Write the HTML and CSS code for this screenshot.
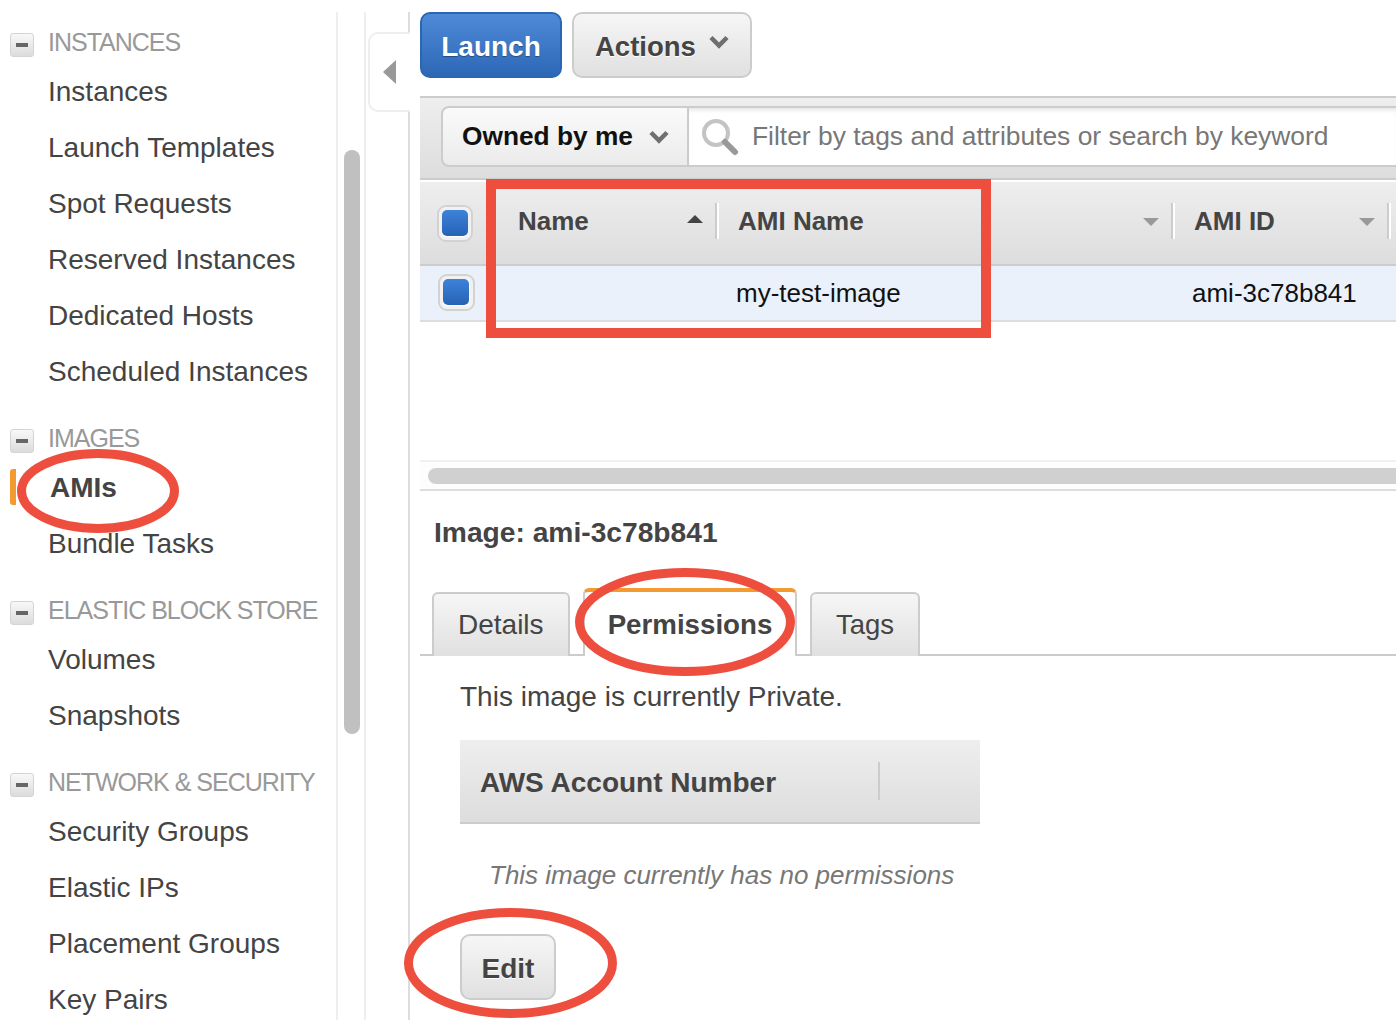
FILE: index.html
```html
<!DOCTYPE html>
<html lang="en">
<head>
<meta charset="utf-8">
<title>AMIs</title>
<link rel="stylesheet" href="styles.css">
</head>
<body>
<div class="page">
  <nav class="nav">
    <section class="group">
      <h3 class="group-head"><span class="minus"></span>INSTANCES</h3>
      <a class="item">Instances</a>
      <a class="item">Launch Templates</a>
      <a class="item">Spot Requests</a>
      <a class="item">Reserved Instances</a>
      <a class="item">Dedicated Hosts</a>
      <a class="item">Scheduled Instances</a>
    </section>
    <section class="group">
      <h3 class="group-head"><span class="minus"></span>IMAGES</h3>
      <a class="item current">AMIs</a>
      <a class="item">Bundle Tasks</a>
    </section>
    <section class="group">
      <h3 class="group-head"><span class="minus"></span>ELASTIC BLOCK STORE</h3>
      <a class="item">Volumes</a>
      <a class="item">Snapshots</a>
    </section>
    <section class="group">
      <h3 class="group-head"><span class="minus"></span>NETWORK &amp; SECURITY</h3>
      <a class="item">Security Groups</a>
      <a class="item">Elastic IPs</a>
      <a class="item">Placement Groups</a>
      <a class="item">Key Pairs</a>
    </section>
  </nav>
  <div class="nav-scroll"><div class="nav-thumb"></div></div>
  <div class="toggle-col">
    <div class="toggle"><svg width="14" height="24" viewBox="0 0 14 24"><path d="M14 0V24L1 12Z" fill="#999"/></svg></div>
  </div>
  <main class="main">
    <div class="toolbar">
      <button class="btn primary">Launch</button>
      <button class="btn actions">Actions<svg class="chev" width="20" height="14" viewBox="0 0 20 14"><path d="M2 2.5L10 10.5L18 2.5" fill="none" stroke="#6f6f6f" stroke-width="4.5"/></svg></button>
    </div>
    <div class="filter-bar">
      <div class="filter-group">
        <div class="owned"><span>Owned by me</span><svg class="chev-small" width="20" height="14" viewBox="0 0 20 14"><path d="M2 2.5L10 10.5L18 2.5" fill="none" stroke="#6f6f6f" stroke-width="4.5"/></svg></div>
        <div class="search">
          <svg width="38" height="38" viewBox="0 0 38 38"><circle cx="15" cy="15" r="12" fill="none" stroke="#c4c4c4" stroke-width="4"/><path d="M24 24L34 34" stroke="#999" stroke-width="6" stroke-linecap="round"/></svg>
          <span>Filter by tags and attributes or search by keyword</span>
        </div>
      </div>
    </div>
    <div class="thead">
      <div class="cell-check"><span class="check"></span></div>
      <div class="th th-name">Name<span class="sort up"></span></div>
      <div class="th th-ami">AMI Name<span class="sort"></span></div>
      <div class="th th-id">AMI ID<span class="sort"></span></div>
    </div>
    <div class="tr">
      <div class="cell-check"><span class="check row-check"></span></div>
      <div class="td td-name"></div>
      <div class="td td-ami">my-test-image</div>
      <div class="td td-id">ami-3c78b841</div>
    </div>
    <div class="table-space"></div>
    <div class="hscroll"><div class="hthumb"></div></div>
    <h2 class="detail-title">Image: ami-3c78b841</h2>
    <div class="tabs">
      <div class="tab">Details</div>
      <div class="tab active">Permissions</div>
      <div class="tab">Tags</div>
    </div>
    <div class="pane">
      <p class="private">This image is currently Private.</p>
      <div class="acct-head"><div class="acct-label">AWS Account Number</div></div>
      <p class="none">This image currently has no permissions</p>
      <button class="btn edit">Edit</button>
    </div>
  </main>
  <div class="mark-rect"></div>
  <svg class="marks" width="1396" height="1020" viewBox="0 0 1396 1020">
    <ellipse cx="98" cy="491" rx="76.500" ry="37.500"/>
    <ellipse cx="685" cy="622" rx="105.500" ry="49.500"/>
    <ellipse cx="510.500" cy="963" rx="102" ry="50.500"/>
  </svg>
</div>
</body>
</html>
```

FILE: styles.css
```css
* { box-sizing: border-box; }
html, body { margin: 0; padding: 0; background: #fff; }
body { font-family: "Liberation Sans", Arial, sans-serif; color: #444; overflow: hidden; }
.page { position: relative; display: flex; width: 1396px; height: 1020px; overflow: hidden; }

.nav { flex: 0 0 338px; height: 1008px; margin-top: 12px; padding-top: 9px; border-right: 2px solid #eee; display: flex; flex-direction: column; gap: 18px; }
.group { display: flex; flex-direction: column; }
.group-head { display: flex; align-items: center; height: 42px; margin: 0; font-size: 25px; font-weight: 400; color: #999; letter-spacing: -1px; }
.minus { flex: 0 0 24px; height: 24px; margin: 6px 14px 0 10px; border: 1px solid #d4d4d4; border-radius: 3px; background: linear-gradient(#f8f8f8, #dcdcdc); display: flex; align-items: center; justify-content: center; }
.minus::before { content: ""; width: 12px; height: 4px; background: #666; }
.item { display: flex; align-items: center; height: 56px; padding: 2px 0 0 48px; font-size: 28px; color: #444; }
.item.current { position: relative; padding-left: 50px; font-weight: 700; }
.item.current::before { content: ""; position: absolute; left: 10px; top: 10px; width: 6px; height: 36px; background: #f49a33; border-radius: 3px 0 0 3px; }

.nav-scroll { flex: 0 0 28px; height: 1008px; margin-top: 12px; border-right: 2px solid #eee; position: relative; }
.nav-thumb { position: absolute; left: 6px; top: 138px; width: 16px; height: 584px; background: #c0c0c0; border-radius: 8px; }

.toggle-col { flex: 0 0 44px; min-width: 0; height: 1008px; margin-top: 12px; border-right: 2px solid #ddd; padding-top: 20px; padding-left: 2px; }
.toggle { width: 42px; height: 80px; background: #fff; border: 2px solid #eee; border-right: 0; border-radius: 10px 0 0 10px; display: flex; align-items: center; padding-left: 12px; }

.main { flex: 1 1 auto; min-width: 0; padding: 12px 0 0 10px; display: flex; flex-direction: column; }
.toolbar { display: flex; gap: 10px; height: 66px; margin-bottom: 18px; }
.btn { font-family: inherit; font-size: 28px; font-weight: 700; border-radius: 10px; padding: 4px 0 0; cursor: pointer; }
.primary { width: 142px; height: 66px; color: #fff; border: 2px solid #2a67b3; background: linear-gradient(#4f8ad9, #2d68b6); text-shadow: 0 1px 1px rgba(0,0,0,.35); }
.actions { width: 180px; height: 66px; font-size: 27.500px; color: #444; border: 2px solid #ccc; background: linear-gradient(#f6f6f6, #e0e0e0); text-shadow: 0 1px 0 #fff; display: flex; align-items: center; padding-left: 21px; }
.chev { margin-left: 13px; margin-top: -10px; }

.filter-bar { width: 976px; height: 84px; padding: 8px 0 0 21px; border-top: 2px solid #ccc; border-bottom: 2px solid #ccc; background: linear-gradient(#eee, #ddd); }
.filter-group { display: flex; height: 61px; }
.owned { width: 248px; height: 61px; display: flex; align-items: center; padding-left: 19px; font-size: 26.300px; font-weight: 700; color: #111; background: linear-gradient(#fafafa, #ebebeb); border: 2px solid #ccc; border-radius: 8px 0 0 8px; }
.chev-small { margin-left: 16px; }
.search { flex: 1; display: flex; align-items: center; gap: 13px; padding-left: 12px; height: 61px; font-size: 26.400px; color: #777; background: #fff; border-top: 2px solid #ccc; border-bottom: 2px solid #ccc; box-shadow: inset 0 4px 4px -2px #e4e4e4; }

.thead { width: 976px; height: 86px; display: flex; background: linear-gradient(#eee, #ddd); border-top: 2px solid #fff; border-bottom: 2px solid #ccc; }
.cell-check { flex: 0 0 77px; position: relative; }
.check { position: absolute; left: 17px; top: 23px; width: 36px; height: 37px; border: 2px solid #d2d2d2; border-radius: 9px; background: #fff; box-shadow: inset 0 0 0 3px #f1f1f1; }
.check::after { content: ""; position: absolute; left: 3px; top: 3px; width: 26px; height: 26px; border-radius: 5px; background: linear-gradient(#3e82da, #2563b4); }
.row-check { left: 18px; top: 8px; width: 37px; }
.th { position: relative; font-size: 26px; font-weight: 700; color: #444; padding-top: 24px; }
.th::after { content: ""; position: absolute; right: 0; top: 21px; width: 2px; height: 36px; background: #ccc; box-shadow: 2px 0 0 #fff; }
.th-name { flex: 0 0 220px; padding-left: 21px; }
.th-ami { flex: 0 0 456px; padding-left: 21px; }
.th-id { flex: 0 0 216px; padding-left: 21px; }
.sort { position: absolute; right: 14px; top: 36px; width: 0; height: 0; border-left: 8px solid transparent; border-right: 8px solid transparent; border-top: 8px solid #999; }
.sort.up { border-top: 0; border-bottom: 8px solid #444; top: 33px; }

.tr { width: 976px; height: 56px; display: flex; background: #eaf1fb; border-bottom: 2px solid #ddd; }
.td { font-size: 26px; color: #111; line-height: 54px; }
.td-name { flex: 0 0 220px; }
.td-ami { flex: 0 0 456px; padding-left: 19px; }
.td-id { flex: 0 0 216px; padding-left: 19px; }

.table-space { height: 138px; }
.hscroll { width: 976px; height: 31px; border-top: 2px solid #f0f0f0; border-bottom: 2px solid #ddd; padding: 6px 0 0 8px; background: #fdfdfd; }
.hthumb { height: 16px; background: #d0d0d0; border-radius: 8px 0 0 8px; }

.detail-title { margin: 0; height: 101px; padding: 23px 0 0 14px; font-size: 28.200px; line-height: 36px; font-weight: 700; color: #444; }
.tabs { display: flex; width: 976px; height: 64px; padding-left: 12px; border-bottom: 2px solid #ccc; }
.tab { height: 64px; padding: 0 24px; font-size: 28px; line-height: 62px; color: #444; background: linear-gradient(#f6f6f6, #e0e0e0); border: 2px solid #ccc; border-bottom: 0; border-radius: 6px 6px 0 0; }
.tab:nth-child(1) { width: 138px; }
.tab.active { width: 214px; height: 68px; margin: -4px 13px 0 13px; padding: 3px 0 0; text-align: center; font-size: 27.700px; font-weight: 700; background: #fff; border-top: 4px solid #f49a33; line-height: 60px; }
.tab:nth-child(3) { width: 110px; font-size: 27.500px; }

.pane { padding: 0 0 0 40px; }
.private { margin: 0; height: 84px; padding-top: 23px; font-size: 28px; line-height: 36px; color: #444; }
.acct-head { width: 520px; height: 84px; background: linear-gradient(#eee, #ddd); border-bottom: 2px solid #ccc; position: relative; }
.acct-head::after { content: ""; position: absolute; left: 418px; top: 22px; width: 2px; height: 38px; background: #ccc; }
.acct-label { padding: 25px 0 0 20px; font-size: 28px; line-height: 36px; font-weight: 700; color: #444; }
.none { margin: 0; height: 110px; padding: 33px 0 0 29px; font-size: 26px; line-height: 36px; font-style: italic; color: #777; }
.edit { width: 96px; height: 66px; color: #444; border: 2px solid #ccc; background: linear-gradient(#f6f6f6, #e0e0e0); text-shadow: 0 1px 0 #fff; }

.mark-rect { position: absolute; left: 486px; top: 179px; width: 505px; height: 159px; border: 10px solid #ee4e3d; }
.marks { position: absolute; left: 0; top: 0; pointer-events: none; }
.marks ellipse { fill: none; stroke: #ee4e3d; stroke-width: 9; }
```
